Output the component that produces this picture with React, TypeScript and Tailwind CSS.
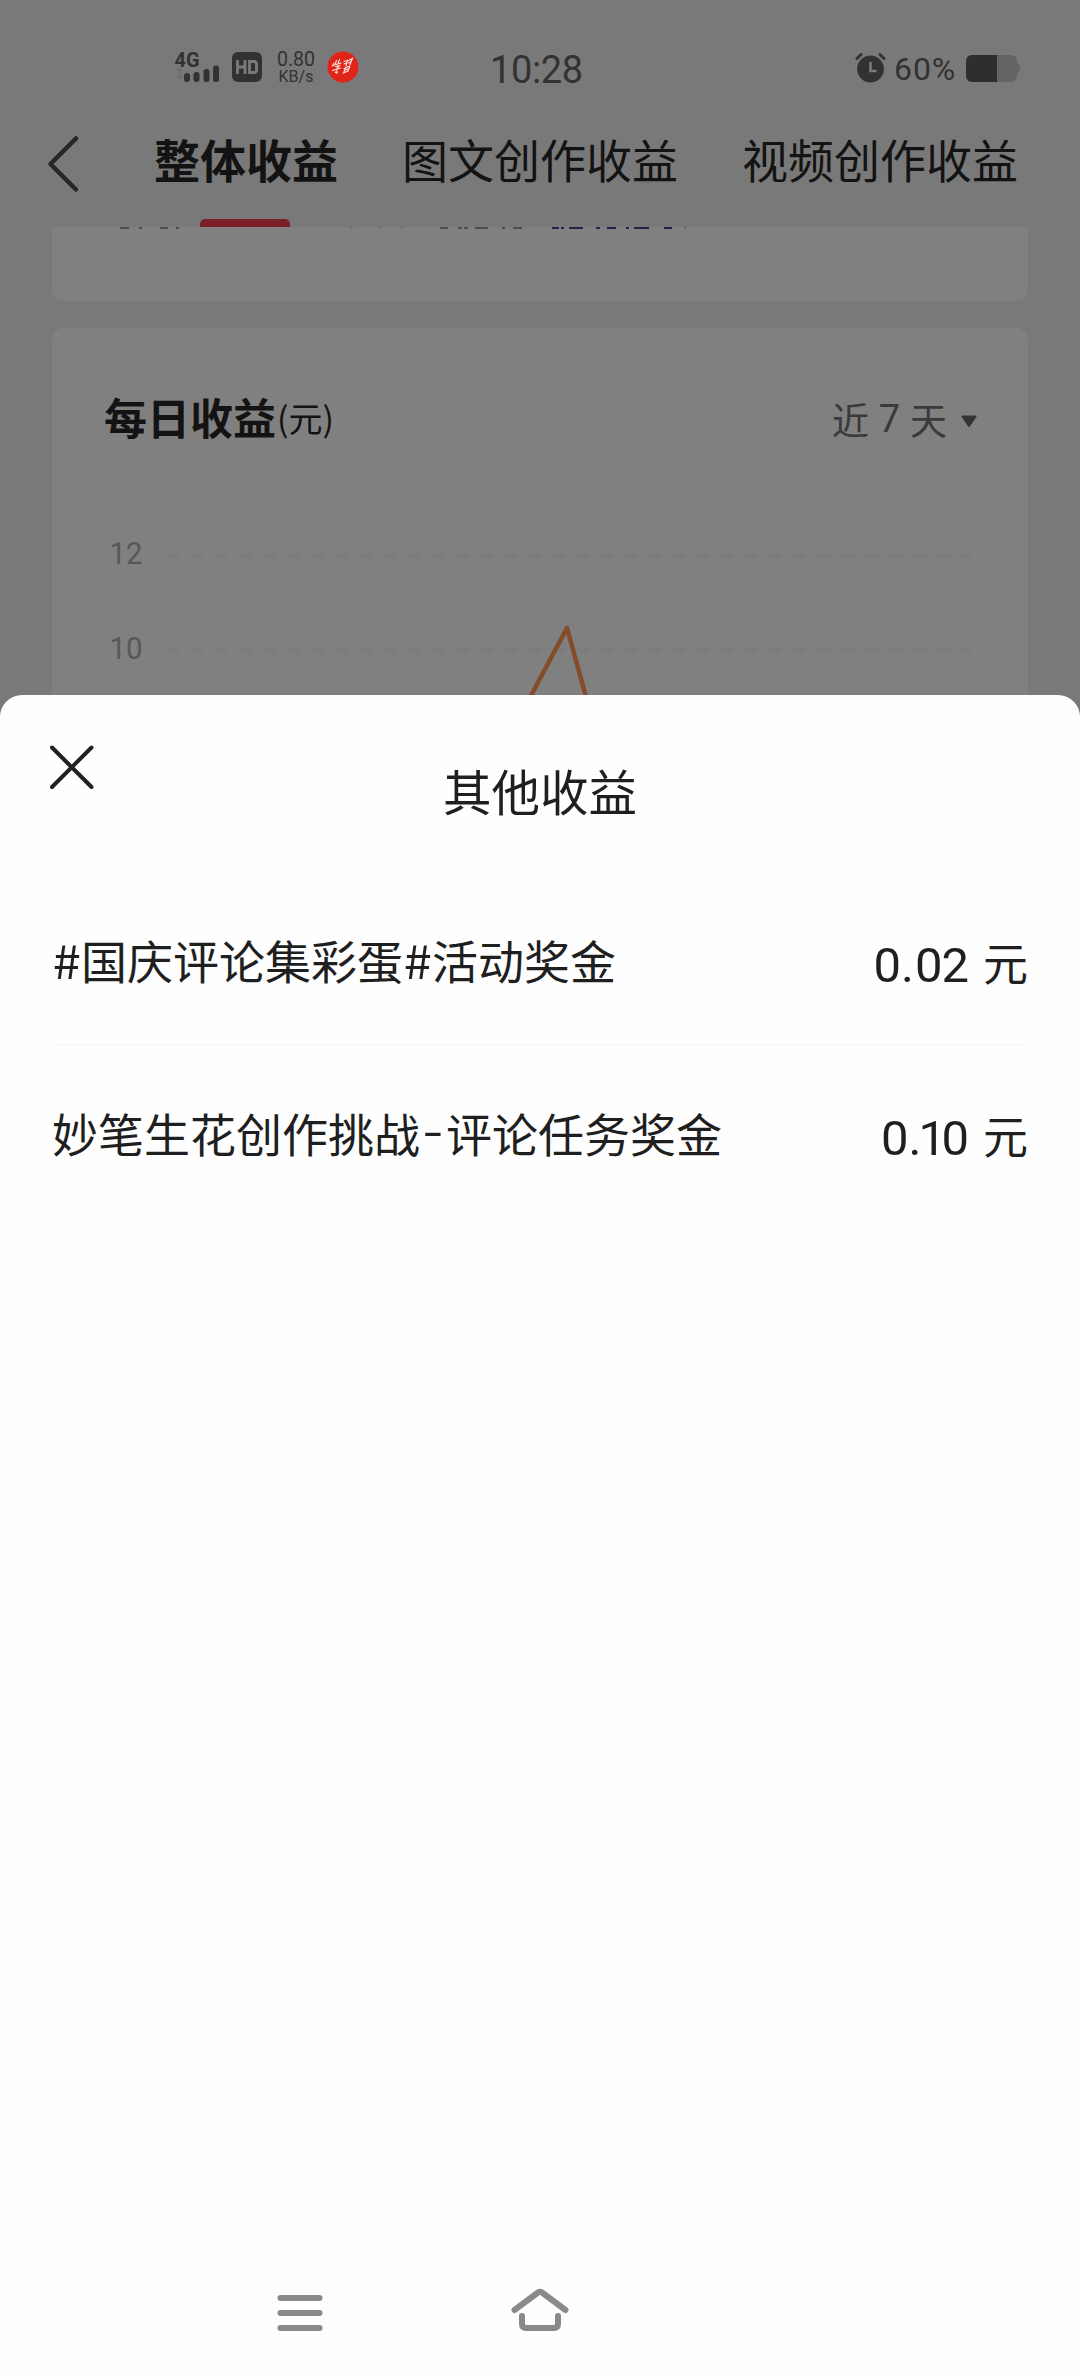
import type { ReactNode } from "react";

const tabs = [
  { label: "整体收益", active: true },
  { label: "图文创作收益", active: false },
  { label: "视频创作收益", active: false },
];

function StatusBar() {
  return (
    <div className="flex h-[110px] shrink-0 items-start text-[#323232]">
      <svg className="mt-[48px] ml-[172px] shrink-0" width="50" height="38" viewBox="172 48 50 38">
        <text x="174.500" y="67" fontFamily="Roboto, sans-serif" fontWeight="700" fontSize="20" textLength="25" lengthAdjust="spacingAndGlyphs" fill="#323232">4G</text>
        <g fill="#323232">
          <rect x="184" y="73" width="6" height="9" rx="3" />
          <rect x="193.500" y="72" width="6" height="10" rx="3" />
          <rect x="203.500" y="69" width="6" height="13" rx="2.500" />
          <rect x="213" y="65.500" width="6" height="16.500" rx="2.500" />
        </g>
        <path d="M177 70h5M179.500 68v6M177 78l2.500-2 2.500 2" fill="none" stroke="#6a6a6a" strokeWidth="1.500" />
      </svg>
      <svg className="mt-[52px] ml-[10px] shrink-0" width="30" height="30" viewBox="0 0 30 30">
        <rect width="30" height="30" rx="6" fill="#323232" />
        <path d="M5.500 8v14M13 8v14M5.500 15H13M17.500 9.500H22a2.500 2.500 0 0 1 2.500 2.500v6a2.500 2.500 0 0 1-2.500 2.500h-4.500z" fill="none" stroke="#7a7a7a" strokeWidth="2.800" />
      </svg>
      <div className="mt-[51px] ml-[14px] w-[40px] shrink-0 text-center font-['Roboto'] text-[19.5px] leading-[18px]">
        <div>0.80</div>
        <div className="text-[16px] leading-[16px]">KB/s</div>
      </div>
      <svg className="mt-[51px] ml-[11px] shrink-0" width="32" height="32" viewBox="0 0 32 32">
        <circle cx="16" cy="16" r="15.500" fill="#e0241a" />
        <g fill="none" stroke="#ffe6df" strokeWidth="1.100" strokeLinecap="round">
          <path d="M7 12l-1.500 3M9.500 9.500l-1 3M12.500 8.500l-1.500 4M6 14.500l8-2.500M8.500 15.500l4-.800-2.500 2.500M5.500 19.500l8-2.500M10 17.500v4.500l-2-1" />
          <path d="M17 10.500l3.500-1-1.500 5.500M17 13l2.500-1M21 9.800l4.500-2.300-2.500 6M21.500 12l2-1M17 17.500l6-2.500M18.500 17l-2 5 4.500-2 1.500-4M18 19l3-1" />
        </g>
      </svg>
      <div className="mt-[48px] ml-[131px] w-[100px] shrink-0 font-['Roboto'] text-[38px] leading-[45px] tracking-[-0.4px] whitespace-nowrap">10:28</div>
      <svg className="mt-[52px] ml-[265px] shrink-0" width="32" height="32" viewBox="0 0 32 32">
        <circle cx="15.500" cy="17" r="13.400" fill="#323232" />
        <path d="M2 6.500L6 2.500M29 6.500L25 2.500" stroke="#323232" strokeWidth="3" strokeLinecap="round" />
        <path d="M15.500 10v9h6" fill="none" stroke="#7a7a7a" strokeWidth="2.600" />
      </svg>
      <div className="mt-[51px] ml-[7px] w-[65px] shrink-0 font-['Roboto'] text-[32px] leading-[36px] tracking-[0.9px] whitespace-nowrap">60%</div>
      <svg className="mt-[55px] ml-[7px] shrink-0" width="56" height="27" viewBox="0 0 56 27">
        <rect width="51" height="27" rx="6" fill="#646464" />
        <path d="M51 8.500q3 1 3 5t-3 5z" fill="#646464" />
        <path d="M6 0h25v27H6a6 6 0 0 1-6-6V6a6 6 0 0 1 6-6z" fill="#2e2e2e" />
      </svg>
    </div>
  );
}

function TabBar() {
  return (
    <div className="flex h-[117px] shrink-0">
      <svg className="mt-[20px] ml-[40px] shrink-0" width="50" height="68" viewBox="40 130 50 68">
        <path d="M76 138.500L50.500 164L76 189.500" fill="none" stroke="#262626" strokeWidth="4.500" strokeLinecap="round" strokeLinejoin="round" />
      </svg>
      <div className="ml-[64px] flex gap-[64px] text-[46px] leading-[68px] whitespace-nowrap text-[#131313]">
        {tabs.map((t) => (
          <div key={t.label} className="flex flex-col items-center pt-[14px]">
            <div className={t.active ? "font-bold" : "font-normal"}>{t.label}</div>
            {t.active && <div className="mt-[27px] -ml-[2px] h-[8px] w-[90px] rounded-t-[5px] bg-[#7a2026]" />}
          </div>
        ))}
      </div>
    </div>
  );
}

/* Lower edge of the balance text that has scrolled under the tab bar. */
function ScrolledTextEdge() {
  return (
    <svg className="-ml-[52px]" width="1080" height="3" viewBox="0 0 1080 3">
      <path d="M120 1h9M139 1h3M160 1h8M176 1h3M440 1h8M458 1h4M464 1h4M475 1h13M502 1h3M513 1h9" stroke="#4d4d4d" strokeWidth="2" />
      <path d="M350 .500h3M379 .500h3M400 .500h3" stroke="#666666" strokeWidth="1" />
      <path d="M552 1h7M561 1h3M569 1h14M596 1h4M607 1h9M626 1h3M634 1h15M664 1h8" stroke="#1f2745" strokeWidth="2" />
      <path d="M684 .500h2" stroke="#4d5366" strokeWidth="1" />
    </svg>
  );
}

function DailyCard() {
  return (
    <section className="mx-[52px] mt-[27px] h-[367px] overflow-hidden rounded-t-[12px] bg-[#808080]">
      <div className="flex h-[127px] items-start justify-between pt-[56px] pr-[50px] pl-[52px]">
        <h2 className="flex items-baseline text-[43px] leading-[64px] font-bold whitespace-nowrap text-[#131313]">
          每日收益<span className="mb-[3px] ml-[1px] -translate-y-[3px] text-[34px] font-normal">(元)</span>
        </h2>
        <div className="flex items-center pt-[2px] text-[37px] leading-[60px] whitespace-nowrap text-[#3a3a3a]">
          <span className="pt-[3px]">近</span>
          <span className="w-[41px] pt-[3px] text-center font-['Roboto'] text-[38px]">7</span>
          <span className="pt-[3px]">天</span>
          <svg className="mt-[7px] ml-[13px]" width="18" height="13" viewBox="0 0 18 13">
            <path d="M2.500 1.500h13L9 11z" fill="#343434" stroke="#343434" strokeWidth="2" strokeLinejoin="round" />
          </svg>
        </div>
      </div>
      <svg className="block" width="976" height="250" viewBox="52 455 976 250">
        <g fontFamily="Roboto, sans-serif" fontSize="32" fill="#585858">
          <text x="109.500" y="564" textLength="33" lengthAdjust="spacingAndGlyphs">12</text>
          <text x="109.500" y="659" textLength="33" lengthAdjust="spacingAndGlyphs">10</text>
        </g>
        <g stroke="#7c7c7c" strokeWidth="4" strokeDasharray="12 12.050">
          <path d="M168 555.500H972M168 650.500H972" />
        </g>
        <path d="M526.500 704L567 628L588 704" fill="none" stroke="#844c29" strokeWidth="4.500" strokeLinejoin="round" />
      </svg>
    </section>
  );
}

/* Digits with a narrow "1" in place of Roboto's tabular one. */
function Amount({ value }: { value: string }) {
  return (
    <span className="flex font-['Roboto'] text-[49px]">
      {value.split("").map((c, i) =>
        c === "1" ? (
          <span key={i} className="-ml-[4px] w-[23px]">{c}</span>
        ) : (
          <span key={i} className={c === "." ? "w-[15px] text-center" : "w-[26.500px] text-center"}>{c}</span>
        ),
      )}
    </span>
  );
}

function Row({ title, amount }: { title: ReactNode; amount: string }) {
  return (
    <div className="flex h-[171px] items-start justify-between text-[46px] leading-[68px] whitespace-nowrap">
      <div className="pt-[51.500px]">{title}</div>
      <div className="flex items-baseline pt-[56px]">
        <Amount value={amount} />
        <span className="ml-[15px] -translate-y-px text-[45px]">元</span>
      </div>
    </div>
  );
}

function Hash() {
  return (
    <span className="inline-block w-[29px] text-center">
      <span className="inline-block scale-x-[1.1]">#</span>
    </span>
  );
}

function Dash() {
  return (
    <span className="inline-block w-[26px] text-center">
      <span className="inline-block -translate-y-[5px] scale-x-[1.3]">-</span>
    </span>
  );
}

export default function App() {
  return (
    <div className="flex h-[2376px] w-[1080px] flex-col overflow-hidden bg-[#797979] font-['Noto_Sans_CJK_SC',sans-serif]">
      <div className="flex h-[695px] shrink-0 flex-col">
        <StatusBar />
        <TabBar />
        <section className="mx-[52px] h-[74px] shrink-0 rounded-b-[12px] bg-[#808080]">
          <ScrolledTextEdge />
        </section>
        <DailyCard />
      </div>
      <div className="flex h-[1681px] shrink-0 flex-col rounded-t-[22px] bg-[#fefefe] text-[#1f1f1f]">
        <div className="flex h-[178px] shrink-0">
          <svg className="mt-[48px] ml-[47px] shrink-0" width="50" height="50" viewBox="47 743 50 50">
            <path d="M52 747.500L91.500 787M91.500 747.500L52 787" stroke="#222222" strokeWidth="4" strokeLinecap="round" />
          </svg>
          <h1 className="-ml-[97px] flex-1 pt-[59px] text-center text-[48.5px] leading-[72px] font-normal">其他收益</h1>
        </div>
        <div className="mx-[52px] flex-1">
          <div className="border-b-2 border-[#f9f9f9]">
            <Row title={<><Hash />国庆评论集彩蛋<Hash />活动奖金</>} amount="0.02" />
          </div>
          <Row title={<>妙笔生花创作挑战<Dash />评论任务奖金</>} amount="0.10" />
        </div>
        <nav className="flex h-[116px] shrink-0">
          <svg className="mt-[29px] ml-[274px] shrink-0" width="52" height="50" viewBox="274 2289 52 50">
            <path d="M280.500 2298h39M280.500 2313h39M280.500 2328h39" stroke="#8a8a8a" strokeWidth="6" strokeLinecap="round" />
          </svg>
          <svg className="mt-[24px] ml-[182px] shrink-0" width="64" height="50" viewBox="508 2284 64 50">
            <path d="M514.500 2310L538 2292.500q2-1.500 4 0L565.500 2310M522 2316v8q0 4 4 4h28q4 0 4-4v-8" fill="none" stroke="#8a8a8a" strokeWidth="6" strokeLinecap="round" />
          </svg>
        </nav>
      </div>
    </div>
  );
}
